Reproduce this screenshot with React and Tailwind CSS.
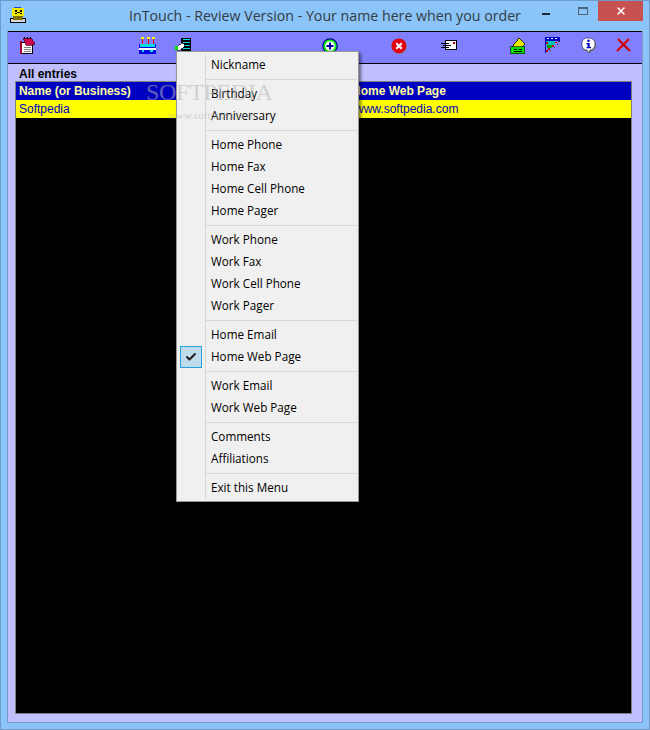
import React from 'react'
import { X, Check } from 'lucide-react'

const uiFont = "font-['Open_Sans','Noto_Sans',sans-serif]"

const menuGroups = [
    ['Nickname'],
    ['Birthday', 'Anniversary'],
    ['Home Phone', 'Home Fax', 'Home Cell Phone', 'Home Pager'],
    ['Work Phone', 'Work Fax', 'Work Cell Phone', 'Work Pager'],
    ['Home Email', 'Home Web Page'],
    ['Work Email', 'Work Web Page'],
    ['Comments', 'Affiliations'],
    ['Exit this Menu'],
]

function AppIcon() {
    return (
        <svg width="17" height="17" viewBox="0 0 17 17" shapeRendering="crispEdges">
            <rect x="0.500" y="11.500" width="15" height="4" fill="#d0d8e0" stroke="#000" />
            <rect x="3" y="9" width="10" height="4" fill="#807000" />
            <rect x="2" y="1" width="12" height="8" fill="#f4ec00" />
            <rect x="4" y="0" width="7" height="1" fill="#2040e0" />
            <rect x="5" y="3" width="2" height="2" fill="#000" />
            <rect x="10" y="3" width="2" height="2" fill="#000" />
            <rect x="7" y="5" width="3" height="1" fill="#000" />
            <rect x="5" y="6" width="2" height="1" fill="#000" />
            <rect x="10" y="6" width="2" height="1" fill="#000" />
        </svg>
    )
}

function NotebookIcon() {
    return (
        <svg width="16" height="17" viewBox="0 0 16 17" shapeRendering="crispEdges">
            <rect x="1" y="5" width="11" height="11" fill="#fff" stroke="#000" />
            <rect x="0" y="4" width="2" height="13" fill="#a00030" />
            <path d="M3 1h8l3 4 1 2-3 1H6z" fill="#d00050" stroke="#400010" strokeWidth="0.7" />
            <path d="M4 0h1v2H4zM7 0h1v2H7zM10 0h1v2h-1z" fill="#000" />
            <path d="M4 10h7v1H4zM4 12h7v1H4zM4 14h7v1H4z" fill="#808080" />
        </svg>
    )
}

function CakeIcon() {
    return (
        <svg width="18" height="17" viewBox="0 0 18 17" shapeRendering="crispEdges">
            <rect x="3" y="2" width="1" height="5" fill="#e00000" />
            <rect x="9" y="2" width="1" height="5" fill="#e00000" />
            <rect x="14" y="2" width="1" height="5" fill="#e00000" />
            <rect x="2" y="0" width="3" height="2" fill="#ffff00" />
            <rect x="8" y="0" width="3" height="2" fill="#ffff00" />
            <rect x="13" y="0" width="3" height="2" fill="#ffff00" />
            <rect x="0" y="7" width="17" height="10" fill="#0000e0" />
            <rect x="1" y="7" width="15" height="3" fill="#00e0e0" />
            <rect x="0" y="11" width="17" height="2" fill="#fff" />
            <rect x="3" y="13" width="2" height="2" fill="#00e0e0" />
            <rect x="11" y="13" width="3" height="2" fill="#00e0e0" />
        </svg>
    )
}

function PhoneListIcon() {
    return (
        <svg width="16" height="16" viewBox="0 0 16 16" shapeRendering="crispEdges">
            <rect x="6" y="1" width="10" height="15" fill="#000" />
            <path d="M8 2h7v1H8zM8 5h7v1H8zM8 8h7v1H8zM8 11h7v1H8zM8 14h7v1H8z" fill="#00e0e0" />
            <path d="M1 10l6-4 2 1v3l-4 3H2z" fill="#fff" stroke="#000" strokeWidth="0.6" />
            <rect x="0" y="9" width="3" height="4" fill="#00e000" />
        </svg>
    )
}

function AddIcon() {
    return (
        <svg width="16" height="16" viewBox="0 0 16 16">
            <circle cx="8" cy="8" r="7.200" fill="#00f000" stroke="#0000a0" strokeWidth="1.200" />
            <circle cx="8" cy="8" r="4.800" fill="#fff" />
            <path d="M7 4.500h2V7h2.500v2H9v2.500H7V9H4.500V7H7z" fill="#0000a0" />
        </svg>
    )
}

function DeleteIcon() {
    return (
        <svg width="16" height="16" viewBox="0 0 16 16">
            <circle cx="8.500" cy="8.500" r="7.400" fill="#808080" />
            <circle cx="7.800" cy="7.800" r="7.400" fill="#e00010" />
            <path d="M4.500 6L6 4.500 8 6.500 10 4.500 11.500 6 9.500 8 11.500 10 10 11.500 8 9.500 6 11.500 4.500 10 6.500 8z" fill="#fff" />
        </svg>
    )
}

function MailIcon() {
    return (
        <svg width="16" height="12" viewBox="0 0 16 12" shapeRendering="crispEdges">
            <rect x="4.500" y="1.500" width="11" height="9" fill="#fff" stroke="#000" />
            <rect x="12" y="3" width="2" height="2" fill="#c00000" />
            <path d="M0 4h8v1H0zM2 6h8v1H2zM0 8h8v1H0z" fill="#000" />
        </svg>
    )
}

function HomeIcon() {
    return (
        <svg width="16" height="16" viewBox="0 0 16 16" shapeRendering="crispEdges">
            <path d="M9 0l6 6-3 3H2z" fill="#e8e800" stroke="#000" strokeWidth="0.8" />
            <rect x="0.500" y="8.500" width="14" height="7" fill="#00e000" stroke="#000" strokeWidth="0.6" />
            <path d="M4 11h3v1H4zM9 11h3v1H9zM4 13h8v1H4z" fill="#000" />
        </svg>
    )
}

function WebIcon() {
    return (
        <svg width="16" height="16" viewBox="0 0 16 16" shapeRendering="crispEdges">
            <rect x="0" y="0" width="15" height="4" fill="#0000c0" />
            <path d="M2 1h2v1H2zM6 1h2v1H6zM10 1h2v1h-2z" fill="#fff" />
            <rect x="0" y="4" width="1" height="12" fill="#0000c0" />
            <rect x="1" y="4" width="9" height="4" fill="#00c0c0" />
            <rect x="2" y="8" width="5" height="3" fill="#00a000" />
            <path d="M3 11h2v2H3zM1 5h2v2H1zM7 8h2v2H7zM1 13h2v2H1zM10 5h2v1h-2z" fill="#c00000" />
            <path d="M5 13h1v1H5zM12 7h1v1h-1zM9 10h1v1H9zM13 4h2v1h-2z" fill="#404040" />
        </svg>
    )
}

function InfoIcon() {
    return (
        <svg width="16" height="17" viewBox="0 0 16 17">
            <path d="M8 2c4 0 7 2 7 6s-3 6-5 6l-1 3-2-3c-3 0-6-2-6-6s3-6 7-6z" fill="#707070" />
            <path d="M7 1c4 0 7 2 7 6s-3 6-5 6l-1 3-2-3C3 13 1 11 1 7s2-6 6-6z" fill="#fff" stroke="#000" strokeWidth="0.500" />
            <circle cx="7.500" cy="3.800" r="1.300" fill="#0000c0" />
            <path d="M5.500 6h3.200v4H10v1.200H5.500V10h1V7.200h-1z" fill="#0000c0" />
        </svg>
    )
}

function CloseRedIcon() {
    return (
        <svg width="15" height="14" viewBox="0 0 15 14">
            <path d="M2 1l12 12M13 1L1 13" stroke="#e00000" strokeWidth="2.200" />
            <path d="M3 3l9 9" stroke="#600000" strokeWidth="0.600" />
        </svg>
    )
}

function TitleBar() {
    return (
        <div className="h-[30px] flex items-start">
            <div className="w-[33px] pl-[9px] pt-[6px]"><AppIcon /></div>
            <div className={`flex-1 pl-[95px] text-[#333b42] text-[14.2px] leading-[30px] whitespace-nowrap ${uiFont}`}>
                InTouch - Review Version - Your name here when you order
            </div>
            <div className="flex items-start pr-[6px]">
                <div className="w-[44px] h-[20px] flex justify-center pt-[12px]">
                    <div className="w-[8px] h-[2px] bg-[#1c2a36]" />
                </div>
                <div className="w-[30px] h-[20px] flex justify-center pt-[6px]">
                    <div className="w-[10px] h-[8px] border border-[#4c6478] border-t-[2px]" />
                </div>
                <div className="w-[45px] h-[20px] bg-[#c75050] flex items-center justify-center">
                    <X size={12} color="#fff" strokeWidth={3} />
                </div>
            </div>
        </div>
    )
}

function Toolbar() {
    return (
        <div className="h-[33px] bg-[#8080ff] border-y border-black flex items-center relative">
            <div className="absolute left-[12px] top-[5px]"><NotebookIcon /></div>
            <div className="absolute left-[131px] top-[5px]"><CakeIcon /></div>
            <div className="absolute left-[167px] top-[5px]"><PhoneListIcon /></div>
            <div className="absolute left-[314px] top-[6px]"><AddIcon /></div>
            <div className="absolute left-[383px] top-[6px]"><DeleteIcon /></div>
            <div className="absolute left-[433px] top-[7px]"><MailIcon /></div>
            <div className="absolute left-[502px] top-[6px]"><HomeIcon /></div>
            <div className="absolute left-[537px] top-[5px]"><WebIcon /></div>
            <div className="absolute left-[573px] top-[5px]"><InfoIcon /></div>
            <div className="absolute left-[608px] top-[6px]"><CloseRedIcon /></div>
        </div>
    )
}

function ListPanel() {
    return (
        <div className="flex-1 bg-[#c0c0ff] pl-[7px] pr-[10px] pb-[8px] flex flex-col font-['Liberation_Sans',Arial,sans-serif] text-[12px]">
            <div className="h-[17px] leading-[21px] font-bold text-black pl-[4px]">All entries</div>
            <div className="flex-1 bg-black border border-[#808080]">
                <div className="h-[18px] bg-[#0000c0] text-[#ffffa0] font-bold leading-[18px] flex">
                    <div className="w-[334px] pl-[3px] tracking-[-0.05px]">Name (or Business)</div>
                    <div className="pl-[2px]">Home Web Page</div>
                </div>
                <div className="h-[18px] bg-[#ffff00] text-[#0000c0] leading-[18px] flex">
                    <div className="w-[337px] pl-[3px]">Softpedia</div>
                    <div className="pl-[2px]">www.softpedia.com</div>
                </div>
            </div>
        </div>
    )
}

function ContextMenu() {
    return (
        <div className={`absolute left-[176px] top-[51px] w-[183px] bg-[#f0f0f0] border border-[#979797] shadow-[2px_2px_3px_rgba(0,0,0,0.5)] py-[2px] text-[11.7px] text-black ${uiFont}`}>
            <div className="absolute left-[28px] top-[2px] bottom-[2px] w-px bg-[#d8d8d8]" />
            {menuGroups.map((group, i) => (
                <div key={group[0]}>
                    {i > 0 && (
                        <div className="h-[7px] flex items-center pl-[29px] pr-[1px]">
                            <div className="h-px w-full bg-[#d7d7d7]" />
                        </div>
                    )}
                    {group.map((item) => (
                        <div key={item} className="h-[22px] leading-[20px] pl-[34px] relative">
                            {item === 'Home Web Page' && (
                                <div className="absolute left-[3px] top-0 w-[22px] h-[22px] bg-[#bfdcec] border border-[#26a0da] flex items-center justify-center">
                                    <Check size={12} color="#202020" strokeWidth={4} />
                                </div>
                            )}
                            {item}
                        </div>
                    ))}
                </div>
            ))}
        </div>
    )
}

// the site's stamp sits on top of everything, list and menu alike
function Watermark() {
    return (
        <div className="absolute inset-0 pointer-events-none">
            <div className="absolute left-[146px] top-[79px] text-[24px] leading-[26px] tracking-[-0.3px] text-[#b4b4b4]/55 font-['Liberation_Serif',serif]">SOFTPEDIA</div>
            <div className="absolute left-[168px] top-[109px] text-[11px] leading-[12px] text-[#b4b4b4]/55 font-['Liberation_Serif',serif]">www.softpedia.com</div>
        </div>
    )
}

export default function App() {
    return (
        <div className="w-[650px] h-[730px] bg-[#8ac4f8] border border-[#6d9ccb] relative overflow-hidden flex flex-col">
            <TitleBar />
            <div className="flex-1 flex flex-col mx-[6px] mb-[6px] border-x border-b border-[#7a9ac8]">
                <Toolbar />
                <ListPanel />
            </div>
            <div className="absolute left-[-1px] top-[-1px] w-[650px] h-[730px]">
                <ContextMenu />
                <Watermark />
            </div>
        </div>
    )
}
